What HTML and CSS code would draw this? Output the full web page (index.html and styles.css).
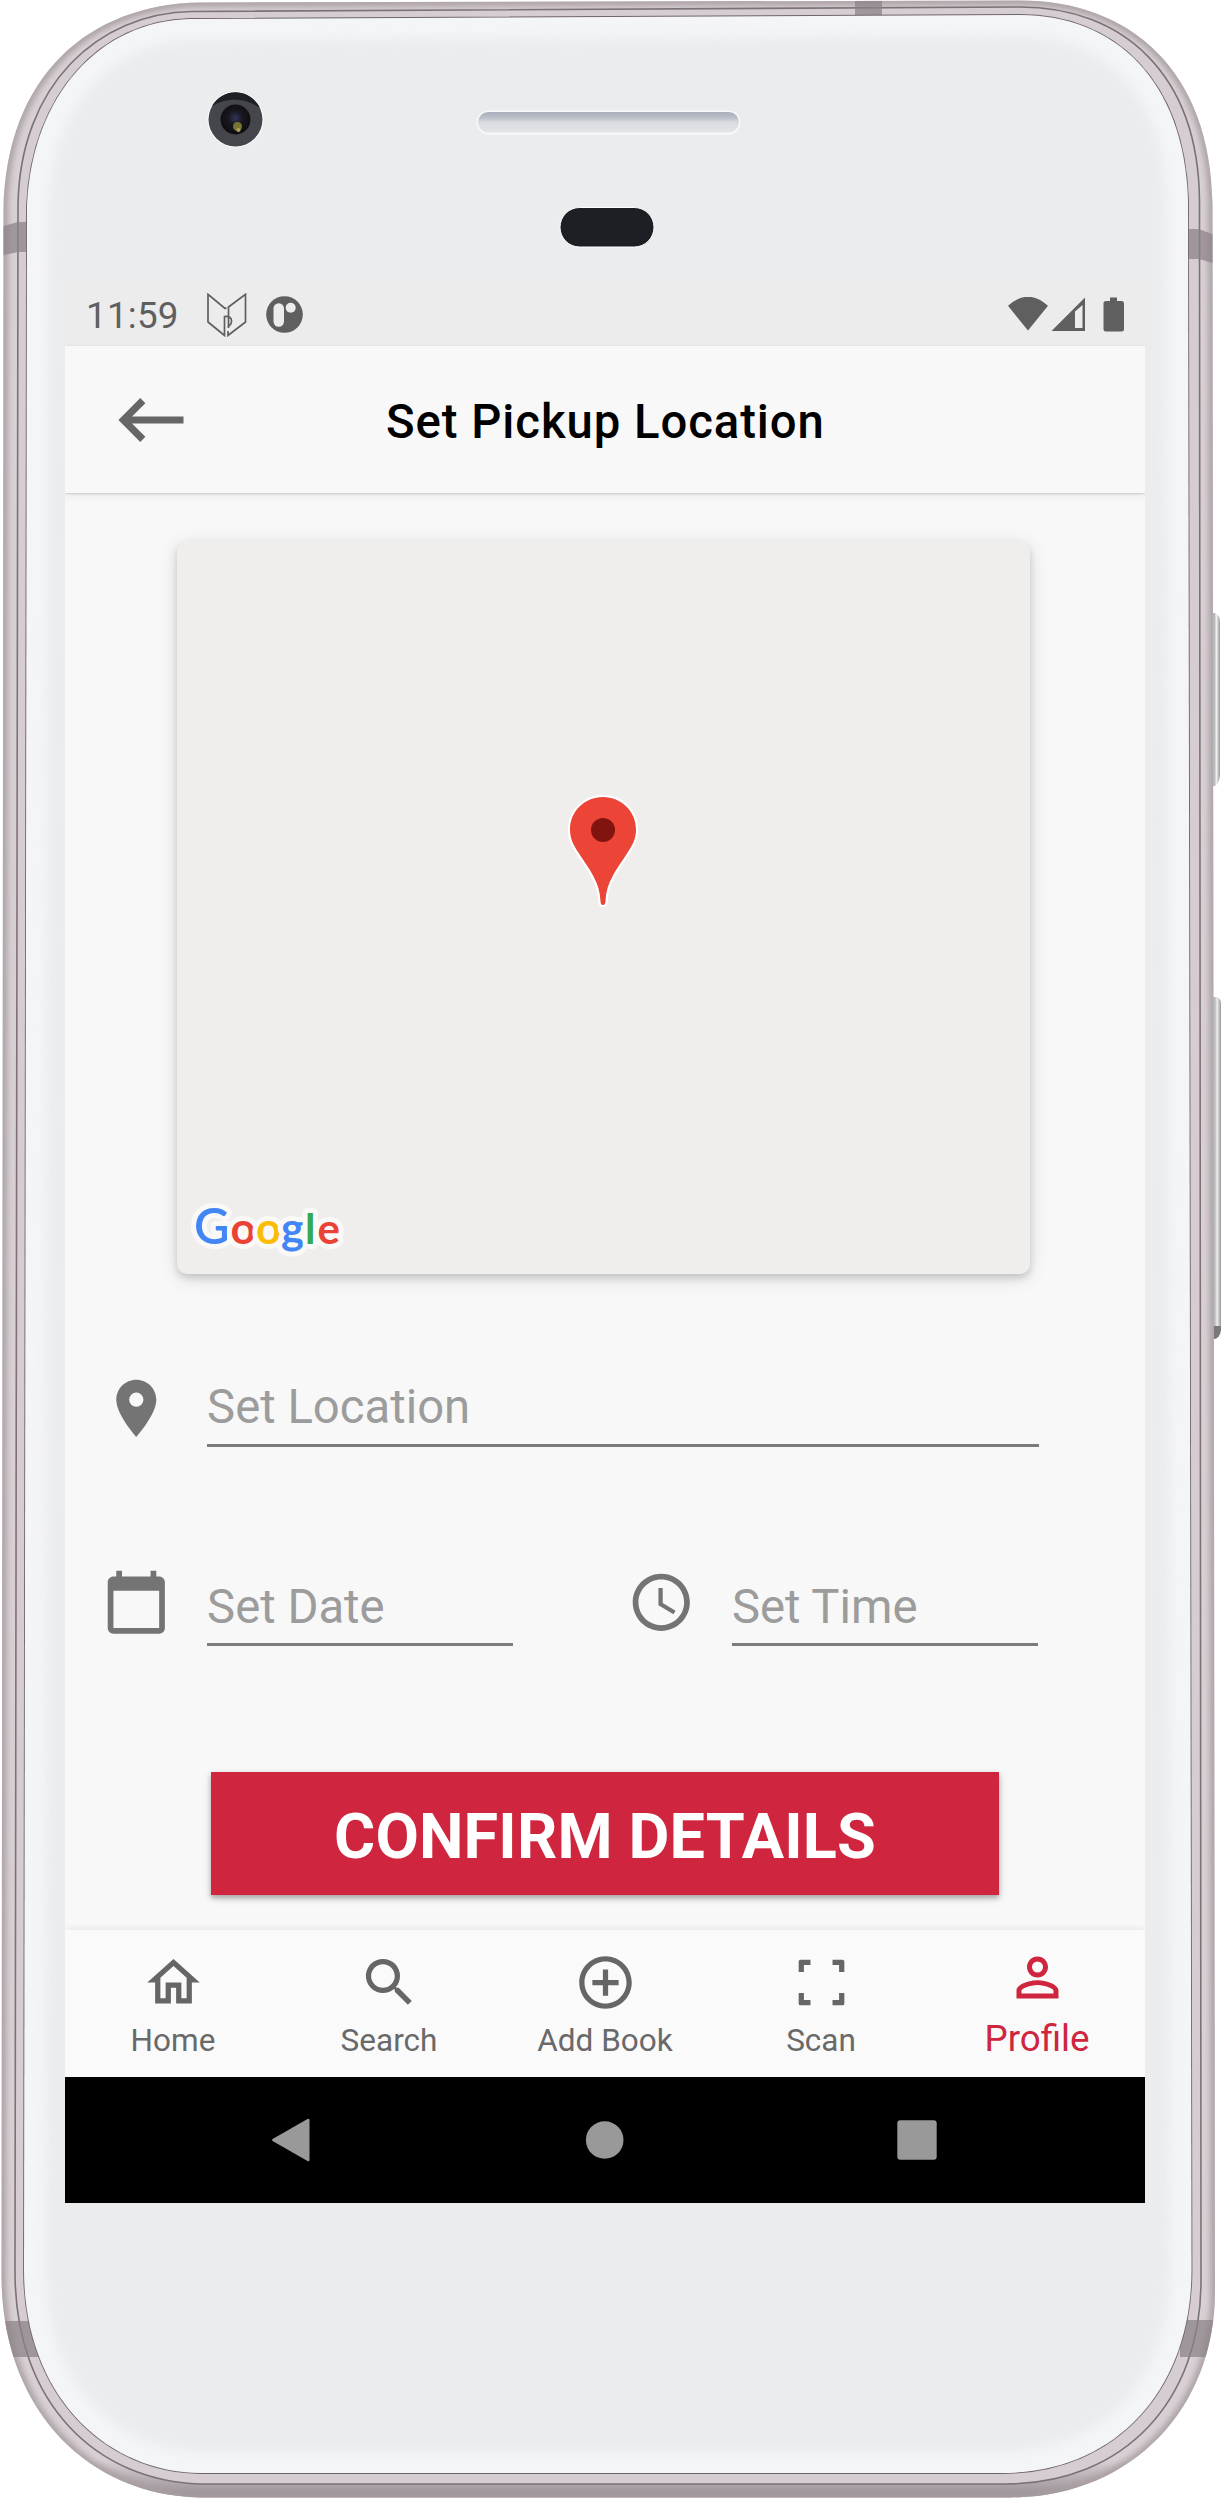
FILE: index.html
```html
<!DOCTYPE html>
<html lang="en">
<head>
<meta charset="utf-8">
<title>Set Pickup Location</title>
<link rel="stylesheet" href="styles.css">
</head>
<body>
<div class="phone">
  <svg class="frame" viewBox="0 0 1222 2498" aria-hidden="true">
    <defs>
      <path id="outer" d="M200 2.5L1020 .5C1130 .5 1211 70 1212.500 205L1215 2290C1215.500 2410 1130 2497.500 1010 2497.500L200 2497.500C86 2495 1.500 2408 1.500 2275L3.500 210C6 75 90 4 200 2.500Z"/>
      <path id="mid" d="M192 11.500L1020 7C1122 7 1198 73 1199.500 200L1201 2280C1201.500 2400 1125 2484 1005 2484L200 2484C98 2481 15 2405 15 2272L18 205C20 85 98 13 192 11.500Z"/>
      <path id="inner" d="M190 19L1020 15C1115 15 1184 80 1188 200L1191.500 2270C1191.500 2388 1117 2473 1002 2473L200 2473C105 2472 24 2395 24 2270L27 205C32 95 100 21 190 19Z"/>
      <clipPath id="outerClip"><use href="#outer"/></clipPath>
      <clipPath id="innerClip"><use href="#inner"/></clipPath>
      <filter id="soft" x="-5%" y="-5%" width="110%" height="110%"><feGaussianBlur stdDeviation="6"/></filter>
      <filter id="edge" x="-5%" y="-5%" width="110%" height="110%"><feGaussianBlur stdDeviation="3"/></filter>
      <linearGradient id="metal" x1="0" y1="0" x2="0" y2="1">
        <stop offset="0" stop-color="#d8d0d4"/><stop offset=".985" stop-color="#d8d0d4"/><stop offset="1" stop-color="#958c91"/>
      </linearGradient>
      <linearGradient id="speaker" x1="0" y1="0" x2="0" y2="1">
        <stop offset="0" stop-color="#a9aebb"/><stop offset=".3" stop-color="#bcc1ca"/><stop offset=".5" stop-color="#d9dbe0"/><stop offset="1" stop-color="#e3e5e8"/>
      </linearGradient>
      <linearGradient id="key" x1="0" y1="0" x2="1" y2="0">
        <stop offset="0" stop-color="#a9aaab"/><stop offset=".45" stop-color="#b9bcbd"/><stop offset=".65" stop-color="#eeeff0"/><stop offset="1" stop-color="#939596"/>
      </linearGradient>
      <radialGradient id="lens" cx=".5" cy=".45" r=".55">
        <stop offset="0" stop-color="#34345c"/><stop offset=".45" stop-color="#17171e"/><stop offset="1" stop-color="#0d0d10"/>
      </radialGradient>
    </defs>
    <path d="M1210 613h5q5 2 5 10v152q-1 9-5 11h-5z" fill="url(#key)"/>
    <path d="M1210 997h7q4 1 4 8v317q0 14-5 17h-6z" fill="url(#key)"/>
    <path d="M1213 1326h8v4q-1 9-8 9z" fill="#77797a"/>
    <use href="#outer" fill="url(#metal)"/>
    <g clip-path="url(#outerClip)">
      <use href="#outer" fill="none" stroke="#a79da2" stroke-width="8" filter="url(#edge)"/>
      <use href="#mid" fill="#d5cdd1" stroke="#7b7277" stroke-width="1.600"/>
      <g fill="#8b8187" fill-opacity=".72">
        <path d="M0 227l18-5h10v30H18l-18 4z"/>
        <path d="M1186 229h13l18 7v28l-18-5h-13z"/>
        <path d="M855 0h27v18h-27z"/>
        <path d="M0 2321h40v36H0z"/>
        <path d="M1180 2320h42v37h-42z"/>
      </g>
    </g>
    <use href="#inner" fill="#ebecee" stroke="#6e656a" stroke-width="1.800"/>
    <g clip-path="url(#innerClip)">
      <use href="#inner" fill="none" stroke="#f4f5f7" stroke-width="42" filter="url(#soft)"/>
    </g>
    <circle cx="235.500" cy="119.500" r="28" fill="#fff"/>
    <circle cx="235.500" cy="119.500" r="27" fill="#45464c"/>
    <path d="M212 106a27 27 0 0 1 48 2q-24-16-48-2z" fill="#1f2025"/>
    <circle cx="235.500" cy="119.500" r="15" fill="url(#lens)"/>
    <circle cx="237.500" cy="126.500" r="4.500" fill="#77762f"/>
    <circle cx="238.500" cy="130" r="2" fill="#b0a060"/>
    <rect x="476.500" y="110.500" width="264" height="24" rx="12" fill="#f8f9fa"/>
    <rect x="478" y="112" width="261" height="20.500" rx="10.250" fill="url(#speaker)"/>
    <rect x="560" y="207.500" width="94" height="39.500" rx="19.700" fill="#1e1f24" stroke="#fff" stroke-width="1"/>
  </svg>

  <main class="screen">
    <header class="status">
      <span class="clock">11:59</span>
      <svg class="book" viewBox="0 0 40 44"><path d="M19.500 14.800L18 15.500L1 1.300V29L17.500 42.500V23.500Q25 23 24.500 28.500Q24 32.500 20.500 33.500M21.500 35V14L38.500 1.300V29L21 42.500V38" fill="none" stroke="#5f5f5f" stroke-width="1.700"/></svg>
      <svg class="badge" viewBox="0 0 37 37"><circle cx="18.500" cy="18.500" r="18.300" fill="#5f5f5f"/><rect x="7.500" y="7.300" width="10.500" height="23.500" rx="5.200" fill="#ececec"/><circle cx="24.700" cy="11.700" r="5" fill="#ececec"/></svg>
      <svg class="signals" viewBox="0 0 116 36"><g fill="#5f5f5f"><path d="M0 8.800Q20-9.300 40 8.800L20 33.500z"/><path fill-rule="evenodd" d="M43.500 34L77 .500V34zM67 14.500V31h7.500V8z"/><path d="M102 .500h7v3.500h4.500q2.500 0 2.500 2.500v25.500q0 2.500-2.500 2.500h-15.500q-2.500 0-2.500-2.500V6.500q0-2.500 2.500-2.500h4z"/></g></svg>
    </header>

    <header class="toolbar">
      <svg class="back" viewBox="0 0 66 44"><path d="M24.800 2.600L5.500 22 24.800 41.400M6 22H65.500" fill="none" stroke="#666" stroke-width="7.200"/></svg>
      <h1 class="title">Set Pickup Location</h1>
    </header>

    <section class="content">
      <div class="map">
        <svg class="marker" viewBox="0 0 72 114"><path d="M36 3C17.500 3 3 17.500 3 35.500C3 45 6.500 51 12 59.500C22 75 33 88 33.500 107Q33.500 111 36 111T38.500 107C39 88 50 75 60 59.500C65.500 51 69 45 69 35.500C69 17.500 54.500 3 36 3Z" fill="#ec4437" stroke="#fff" stroke-width="4.500" paint-order="stroke"/><circle cx="36" cy="36" r="12" fill="#811411"/></svg>
        <svg class="google" viewBox="0 0 156 62" font-family="Lato" font-weight="700" font-size="44"><text y="44" stroke="#faf9f8" stroke-width="10" stroke-linejoin="round" paint-order="stroke"><tspan x="2" font-weight="600" font-size="49" fill="#4285f4">G</tspan><tspan x="38.500" fill="#ea4335">o</tspan><tspan x="64" fill="#fbbc05">o</tspan><tspan x="89" fill="#4285f4">g</tspan><tspan x="113" font-size="42" fill="#34a853">l</tspan><tspan x="125.500" font-size="42" fill="#ea4335">e</tspan></text></svg>
      </div>

      <div class="row location">
        <svg class="icon" viewBox="0 0 24 24"><path d="M12 2C8.130 2 5 5.130 5 9c0 5.250 7 13 7 13s7-7.750 7-13c0-3.870-3.130-7-7-7zm0 9.500a2.500 2.500 0 0 1 0-5 2.500 2.500 0 0 1 0 5z"/></svg>
        <span class="field">Set Location</span>
      </div>

      <div class="row when">
        <svg class="icon" viewBox="0 0 24 24"><path d="M20 3h-1V1h-2v2H7V1H5v2H4c-1.100 0-2 .9-2 2v16c0 1.100.9 2 2 2h16c1.100 0 2-.9 2-2V5c0-1.100-.9-2-2-2zm0 18H4V8h16v13z"/></svg>
        <span class="field">Set Date</span>
        <svg class="icon time-icon" viewBox="0 0 24 24"><path d="M11.990 2C6.470 2 2 6.480 2 12s4.470 10 9.990 10C17.520 22 22 17.520 22 12S17.520 2 11.990 2zM12 20c-4.420 0-8-3.580-8-8s3.580-8 8-8 8 3.580 8 8-3.580 8-8 8zm.5-13H11v6l5.250 3.150.75-1.230-4.500-2.670z"/></svg>
        <span class="field">Set Time</span>
      </div>

      <button class="confirm">CONFIRM DETAILS</button>
    </section>

    <nav class="tabs">
      <a class="tab"><svg viewBox="0 0 24 24"><path d="M12 5.690l5 4.500V18h-2v-6H9v6H7v-7.810l5-4.500M12 3L2 12h3v8h6v-6h2v6h6v-8h3L12 3z"/></svg><span>Home</span></a>
      <a class="tab"><svg viewBox="0 0 24 24"><path d="M15.500 14h-.79l-.28-.27A6.471 6.471 0 0 0 16 9.500 6.500 6.500 0 1 0 9.500 16c1.610 0 3.090-.59 4.230-1.570l.27.28v.79l5 4.990L20.490 19l-4.990-5zm-6 0C7.010 14 5 11.990 5 9.500S7.010 5 9.500 5 14 7.010 14 9.500 11.990 14 9.500 14z"/></svg><span>Search</span></a>
      <a class="tab"><svg viewBox="0 0 24 24"><path d="M13 7h-2v4H7v2h4v4h2v-4h4v-2h-4V7zm-1-5C6.480 2 2 6.480 2 12s4.480 10 10 10 10-4.480 10-10S17.520 2 12 2zm0 18c-4.410 0-8-3.590-8-8s3.590-8 8-8 8 3.590 8 8-3.590 8-8 8z"/></svg><span>Add Book</span></a>
      <a class="tab"><svg viewBox="0 0 24 24"><path d="M3.300 8V4Q3.300 3.300 4 3.300H7.800V5.300H5.300V8zM16.200 3.300H20Q20.700 3.300 20.700 4V8H18.700V5.300H16.200zM3.300 16H5.300V18.700H7.800V20.700H4Q3.300 20.700 3.300 20zM18.700 16H20.700V20Q20.700 20.700 20 20.700H16.200V18.700H18.700z"/></svg><span>Scan</span></a>
      <a class="tab active"><svg viewBox="0 0 24 24"><path d="M12 5.900a2.100 2.100 0 1 1 0 4.200 2.100 2.100 0 0 1 0-4.200m0 9c2.970 0 6.100 1.460 6.100 2.100v1.100H5.900V17c0-.64 3.130-2.100 6.100-2.100M12 4C9.790 4 8 5.790 8 8s1.790 4 4 4 4-1.790 4-4-1.790-4-4-4zm0 9c-2.670 0-8 1.340-8 4v3h16v-3c0-2.660-5.330-4-8-4z"/></svg><span>Profile</span></a>
    </nav>

    <footer class="system">
      <svg viewBox="0 0 40 46"><path d="M36.500 2Q38.500 1 38.500 3V43Q38.500 45 36.500 44L2 24.200Q0 23 2 21.800Z"/></svg>
      <svg viewBox="0 0 40 46"><circle cx="20.700" cy="23" r="18.800"/></svg>
      <svg viewBox="0 0 40 46"><rect x=".3" y="3.300" width="39.400" height="39.400" rx="3"/></svg>
    </footer>
  </main>
</div>
</body>
</html>
```
FILE: styles.css
```css
* { box-sizing: border-box; }

body {
  margin: 0;
  background: #fff;
  font-family: Roboto, sans-serif;
}

svg { display: block; flex: none; }

.phone {
  display: grid;
  width: 1222px;
  height: 2498px;
}

.frame, .screen { grid-area: 1 / 1; }

.frame { width: 1222px; height: 2498px; }

.screen {
  display: flex;
  flex-direction: column;
  width: 1080px;
  height: 1920px;
  margin: 283px 0 0 65px;
  background: #f8f8f8;
  overflow: hidden;
  z-index: 1;
}

.status {
  display: flex;
  align-items: center;
  height: 63px;
  padding: 0 21px;
  background: #ececec;
  color: #5f5f5f;
}

.clock {
  width: 120.500px;
  padding-top: 2px;
  font-size: 36.75px;
  line-height: 61px;
  letter-spacing: .25px;
}

.book { width: 40px; height: 44px; }
.badge { width: 37px; height: 37px; margin-left: 19px; }
.signals { width: 116px; height: 36px; margin-left: auto; }

.toolbar {
  display: flex;
  align-items: center;
  height: 147px;
  padding-left: 53px;
  background: #f8f8f8;
  box-shadow: 0 1px 2px rgba(0, 0, 0, .16), 0 3px 9px rgba(0, 0, 0, .06);
  z-index: 1;
}

.back { width: 66px; height: 44px; }

.title {
  margin: 5px 0 0 202px;
  font-size: 47.25px;
  font-weight: 500;
  line-height: 56px;
  letter-spacing: .95px;
  color: #000;
}

.content {
  flex: 1;
  padding: 47.700px 37px 0;
}

.map {
  display: grid;
  width: 853px;
  height: 733.800px;
  margin-left: 75px;
  border-radius: 10px;
  background: #efeeec;
  box-shadow: 0 4px 7px rgba(0, 0, 0, .14), 0 4px 20px rgba(0, 0, 0, .12);
}

.marker {
  grid-area: 1 / 1;
  width: 72px;
  height: 114px;
  margin: 253px 0 0 390px;
}

.google {
  grid-area: 1 / 1;
  align-self: end;
  width: 156px;
  height: 62px;
  margin: 0 0 12.500px 15px;
  overflow: visible;
}

.row { display: flex; }

.location { height: 73px; margin-top: 99.500px; }
.when { height: 78.200px; margin-top: 121.300px; }

.icon { width: 68.600px; height: 68.600px; fill: #747474; }
.time-icon { margin-left: 113.800px; }

.field {
  align-self: flex-end;
  width: 306px;
  margin-left: 36.500px;
  padding-bottom: 8.500px;
  border-bottom: 3px solid #7c7c7c;
  font-size: 47.25px;
  line-height: 55.400px;
  color: #9c9c9c;
}

.location .field { width: 831.500px; }

.confirm {
  display: block;
  width: 788px;
  height: 123.500px;
  margin: 125.200px 0 0 109px;
  padding: 6px 0 0;
  border: 0;
  background: #cf253e;
  box-shadow: 0 3px 5px rgba(0, 0, 0, .28), 0 3px 10px rgba(0, 0, 0, .1);
  font: 700 63px/1.2 Roboto, sans-serif;
  letter-spacing: .15px;
  color: #fff;
}

.tabs {
  display: flex;
  height: 147px;
  background: #fafafa;
  box-shadow: 0 0 8px rgba(0, 0, 0, .1);
}

.tab {
  display: flex;
  flex: 1;
  flex-direction: column;
  align-items: center;
  padding-top: 21px;
  font-size: 31.500px;
  line-height: 37px;
  color: #696969;
  fill: #666;
}

.tab svg { width: 63px; height: 63px; }
.tab span { margin-top: 8px; }

.active {
  padding-top: 15.500px;
  font-size: 36.75px;
  line-height: 43px;
  color: #cf253e;
  fill: #cf253e;
}

.system {
  display: flex;
  align-items: center;
  justify-content: space-between;
  height: 126px;
  padding: 0 208.500px 0 205.500px;
  background: #000;
  fill: #999;
}

.system svg { width: 40px; height: 46px; }
```
